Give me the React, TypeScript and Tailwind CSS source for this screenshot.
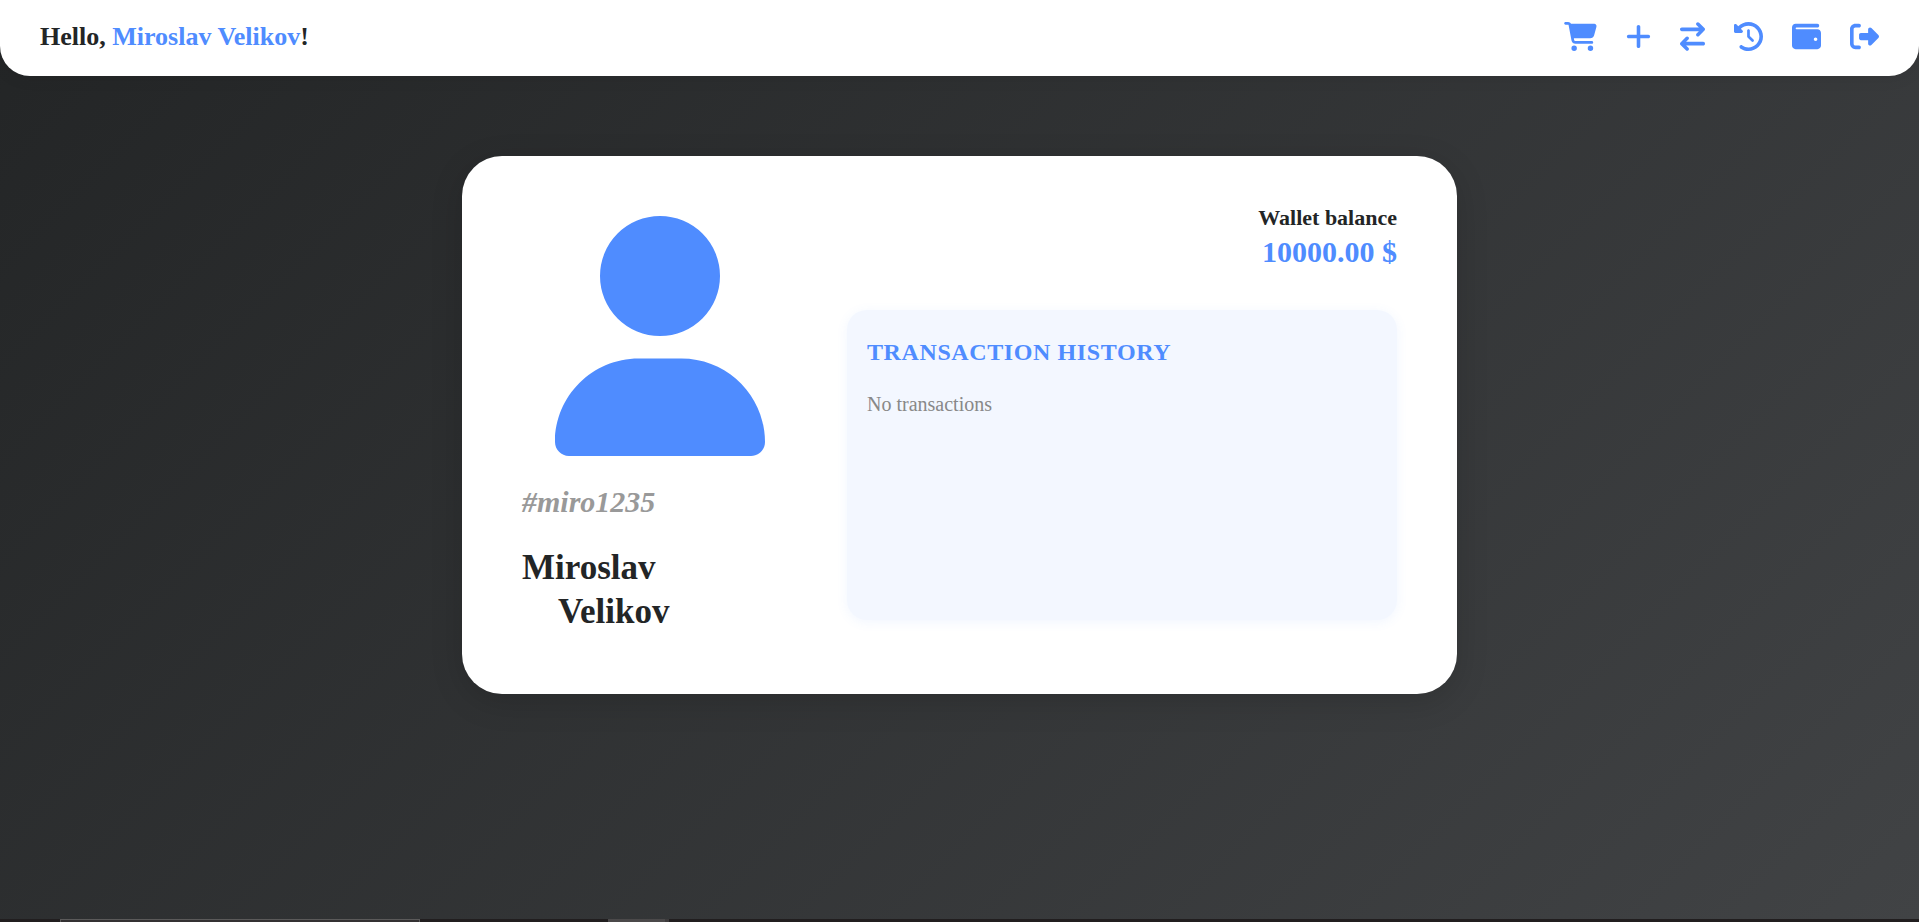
import { FaCartShopping, FaPlus, FaArrowRightArrowLeft, FaClockRotateLeft, FaWallet, FaRightFromBracket, FaUser } from "react-icons/fa6";

const links = [
  { label: "Shop", Icon: FaCartShopping, size: "w-[33px]" },
  { label: "Add funds", Icon: FaPlus, size: "w-[25px]" },
  { label: "Transfer", Icon: FaArrowRightArrowLeft, size: "w-[25px]" },
  { label: "History", Icon: FaClockRotateLeft, size: "w-[29px]" },
  { label: "Wallet", Icon: FaWallet, size: "w-[29px]" },
  { label: "Log out", Icon: FaRightFromBracket, size: "w-[29px]" },
];

function Header() {
  return (
    <header className="flex h-[76px] shrink-0 items-center justify-between rounded-b-[30px] bg-white px-10 pb-[3px] shadow-[0_2px_16px_rgba(0,0,0,0.08)]">
      <p className="text-[26px] leading-8 font-bold">
        Hello, <span className="text-[#4f8cff]">Miroslav Velikov</span>!
      </p>
      <nav className="flex items-center gap-[29px] text-[#4f8cff]">
        {links.map(({ label, Icon, size }) => (
          <a key={label} href="#" aria-label={label}>
            <Icon className={`h-[29px] ${size}`} />
          </a>
        ))}
      </nav>
    </header>
  );
}

function Profile() {
  return (
    <section className="flex w-[275px] shrink-0 flex-col pt-3">
      <FaUser className="h-[240px] w-[210px] self-center text-[#4f8cff]" />
      <p className="mt-7 text-[30px] leading-9 font-bold text-[#999999] italic">#miro1235</p>
      <h1 className="mt-[26px] text-[35px] leading-11 font-bold">
        <span className="block">Miroslav</span>
        <span className="block pl-9">Velikov</span>
      </h1>
    </section>
  );
}

function Wallet() {
  return (
    <section className="flex min-w-0 flex-1 flex-col">
      <div className="text-right font-bold">
        <h2 className="text-[22px] leading-7">Wallet balance</h2>
        <p className="text-[30px] leading-10 text-[#4f8cff]">10000.00 $</p>
      </div>
      <div className="mt-[38px] h-[310px] rounded-[20px] bg-[#f3f7ff] px-5 py-[26px] shadow-[0_2px_12px_rgba(79,140,255,0.08)]">
        <h2 className="text-[24px] leading-8 font-bold tracking-wide text-[#4f8cff]">TRANSACTION HISTORY</h2>
        <p className="mt-[22px] text-[20px] leading-7 text-[#888888]">No transactions</p>
      </div>
    </section>
  );
}

export default function App() {
  return (
    <div className="flex min-h-screen flex-col bg-[#211e1f] font-['Liberation_Serif',serif] text-[#232526]">
      <div className="flex flex-1 flex-col bg-linear-135 from-[#232526] to-[#414345]">
        <Header />
        <main className="flex flex-1 items-start justify-center px-6 pt-20">
          <div className="flex w-full max-w-[995px] gap-[50px] rounded-[40px] bg-white px-[60px] pt-12 pb-[60px] shadow-[0_8px_32px_rgba(0,0,0,0.15)]">
            <Profile />
            <Wallet />
          </div>
        </main>
      </div>
      <footer className="flex h-[3px] shrink-0">
        <div className="ml-[60px] w-[360px] border-x border-t border-[#5b5a5a] bg-[#343132]" />
        <div className="ml-[188px] w-[61px] border-r-4 border-[#3d3b3c] bg-[#4b494a]" />
      </footer>
    </div>
  );
}
